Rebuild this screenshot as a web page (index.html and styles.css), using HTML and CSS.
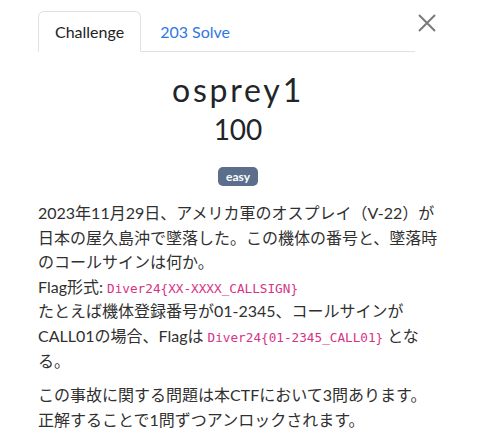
FILE: index.html
```html
<!DOCTYPE html>
<html lang="ja">
<head>
<meta charset="utf-8">
<link rel="stylesheet" href="styles.css">
</head>
<body>
<div class="modal">
  <div class="header">
    <ul class="tabs">
      <li class="tab active">Challenge</li>
      <li class="tab link">203 Solve</li>
    </ul>
    <button class="close" aria-label="Close">
      <svg width="18" height="18" viewBox="0 0 18 18"><path d="M1 1L17 17M17 1L1 17" stroke="#7a7a7a" stroke-width="2" fill="none"/></svg>
    </button>
  </div>
  <h2 class="name">osprey1</h2>
  <h3 class="value">100</h3>
  <div class="tags"><span class="badge">easy</span></div>
  <div class="desc">
    <p>2023年11月29日、アメリカ軍のオスプレイ（V-22）が日本の屋久島沖で墜落した。この機体の番号と、墜落時のコールサインは何か。<br>Flag形式: <code>Diver24{XX-XXXX_CALLSIGN}</code><br>たとえば機体登録番号が01-2345、コールサインがCALL01の場合、Flagは <code>Diver24{01-2345_CALL01}</code> となる。</p>
    <p>この事故に関する問題は本CTFにおいて3問あります。正解することで1問ずつアンロックされます。</p>
  </div>
</div>
</body>
</html>
```

FILE: styles.css
```css
html, body {
  margin: 0;
  padding: 0;
  background: #fff;
}
body {
  font-family: Lato, "Noto Sans CJK JP", sans-serif;
  color: #212529;
}
.modal {
  padding: 11px 42px 0 38px;
}
.header {
  display: flex;
  align-items: flex-start;
  gap: 3px;
}
.tabs {
  list-style: none;
  margin: 0;
  padding: 0;
  display: flex;
  width: 377px;
  border-bottom: 1px solid #dee2e6;
  gap: 2px;
}
.tab {
  font-size: 16px;
  line-height: 24px;
  padding: 8px 16px 7px;
  border: 1px solid transparent;
  border-top-left-radius: 6px;
  border-top-right-radius: 6px;
  margin-bottom: -1px;
}
.tab.active {
  border-color: #dee2e6 #dee2e6 #fff;
  color: #222;
}
.tab.link {
  color: #2f78e4;
}
.close {
  margin: 3px 0 0;
  padding: 0;
  border: 0;
  background: none;
  width: 18px;
  height: 18px;
  display: block;
}
.close svg { display: block; }
.name {
  margin: 18px 0 0;
  text-align: center;
  font-size: 32px;
  font-weight: 400;
  letter-spacing: 2.8px;
  line-height: 40px;
  color: #212529;
}
.value {
  margin: 0;
  text-align: center;
  font-size: 28px;
  font-weight: 400;
  line-height: 38px;
  color: #212529;
}
.tags {
  text-align: center;
  margin-top: 17px;
  line-height: 19px;
}
.badge {
  display: inline-block;
  background: #5b6f8c;
  color: #fff;
  font-weight: 700;
  font-size: 12px;
  line-height: 19px;
  padding: 0 8px;
  border-radius: 5px;
}
.desc {
  margin-top: 15px;
  font-size: 16px;
  line-height: 24.6px;
  color: #303030;
}
.desc p {
  margin: 0 0 10px;
}
code {
  font-family: "DejaVu Sans Mono", monospace;
  font-size: 12.7px;
  line-height: 1;
  color: #d63384;
}
```
